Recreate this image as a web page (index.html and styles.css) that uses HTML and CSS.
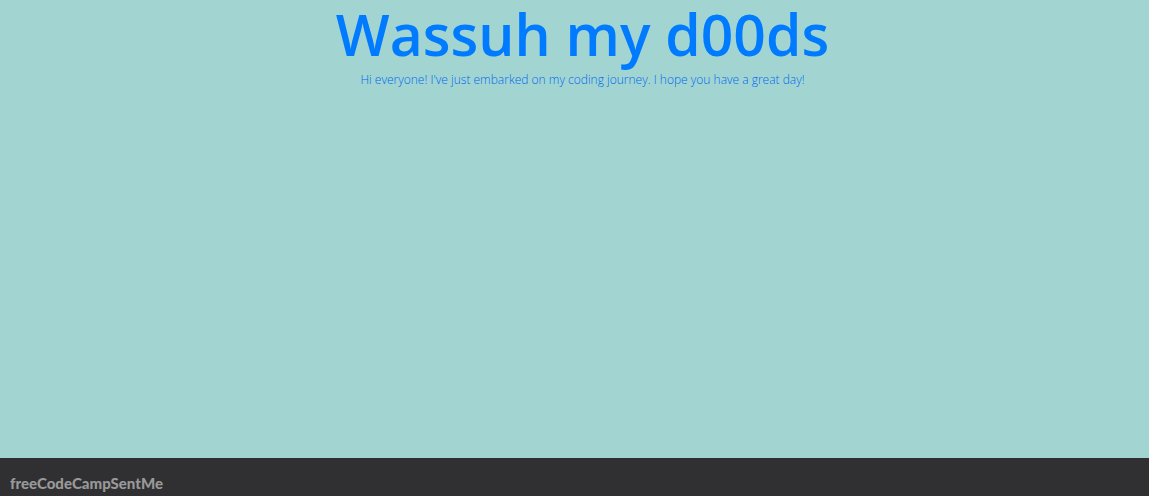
FILE: index.html
```html
<!DOCTYPE html>
<html lang="en">
<head>
<meta charset="utf-8">
<title>Wassuh my d00ds</title>
<link rel="stylesheet" href="styles.css">
</head>
<body>
<main class="intro">
<h1 class="intro-title">Wassuh my d00ds</h1>
<p class="intro-text">Hi everyone! I've just embarked on my coding journey. I hope you have a great day!</p>
</main>
<footer class="footer">freeCodeCampSentMe</footer>
</body>
</html>
```
FILE: styles.css
```css
body {
  margin: 0;
  min-height: 100vh;
  display: flex;
  flex-direction: column;
  background: #a2d5d1;
}

.intro {
  flex: 1;
  padding-left: 16px;
  text-align: center;
  color: #007bff;
  font-family: "Open Sans", "Noto Sans", sans-serif;
}

.intro-title {
  margin: 0;
  font-size: 57px;
  line-height: 69px;
  font-weight: 600;
}

.intro-text {
  margin: 0;
  padding-top: 3px;
  color: #0068f0;
  font-size: 12px;
  line-height: 16px;
  font-weight: 300;
}

.footer {
  padding: 15px 10px 3px;
  background: #303032;
  color: #999;
  font-family: Lato, sans-serif;
  font-size: 15px;
  line-height: 20px;
  font-weight: 900;
}
```
